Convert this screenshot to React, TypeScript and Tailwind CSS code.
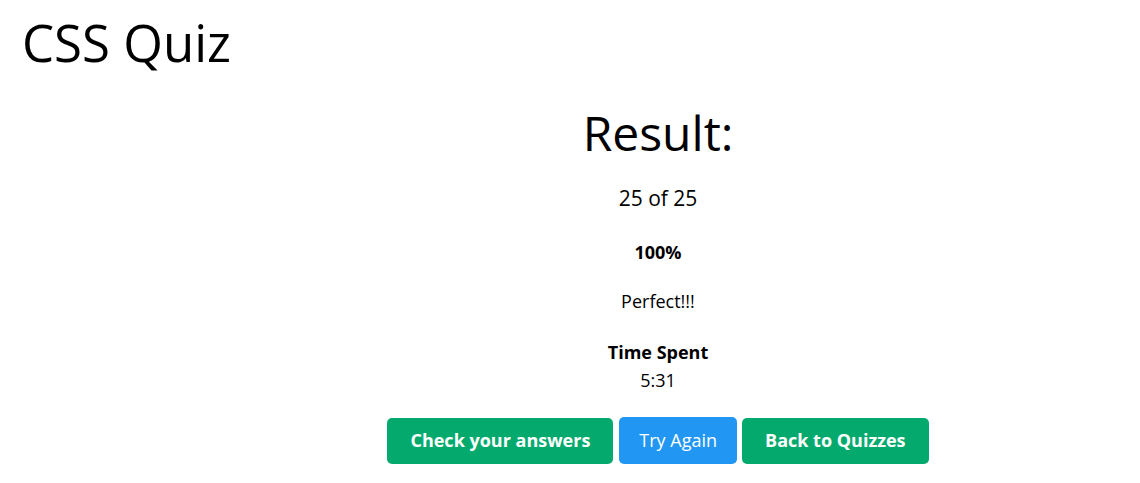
export default function App() {
  return (
    <div className="min-h-screen bg-white text-black" style={{ fontFamily: '"Open Sans", "Noto Sans", sans-serif' }}>
      <h1 className="pl-[22px] pt-[8px] text-[51px] leading-[68px] font-normal">CSS Quiz</h1>
      <div className="pl-[176px]">
        <div className="flex flex-col items-center text-center">
          <h2 className="mt-[25px] text-[48px] leading-[64px] font-normal">Result:</h2>
          <p className="mt-[19px] text-[21px] leading-[28px]">25 of 25</p>
          <p className="mt-[26px] text-[18px] leading-[28px] font-bold">100%</p>
          <p className="mt-[21px] text-[18px] leading-[28px]">Perfect!!!</p>
          <p className="mt-[23px] text-[18px] leading-[28px] font-bold">Time Spent</p>
          <p className="text-[18px] leading-[28px]">5:31</p>
          <div className="mt-[23px] flex items-center">
            <button className="h-[46px] rounded-[5px] bg-[#04AA6D] px-[23px] text-[18px] font-bold text-white">
              Check your answers
            </button>
            <button className="ml-[6px] h-[47px] rounded-[5px] bg-[#2196F3] px-[20px] text-[18px] text-white">
              Try Again
            </button>
            <button className="ml-[5px] h-[46px] rounded-[5px] bg-[#04AA6D] px-[23px] text-[18px] font-bold text-white">
              Back to Quizzes
            </button>
          </div>
        </div>
      </div>
    </div>
  );
}
